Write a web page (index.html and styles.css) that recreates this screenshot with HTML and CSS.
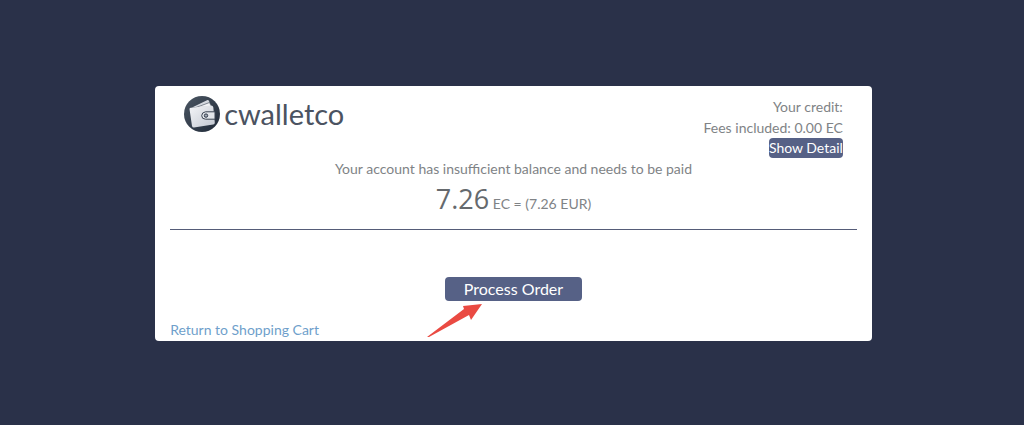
FILE: index.html
```
<!DOCTYPE html>
<html lang="en">
<head>
    <meta charset="UTF-8">
    <meta name="viewport" content="width=device-width, initial-scale=1.0">
    <title>cwalletco</title>
    <link rel="stylesheet" href="styles.css">
</head>
<body>
    <main class="container">
        <header class="top">
            <div class="logo">
                <svg class="logo-icon" viewBox="0 0 36 36" aria-hidden="true">
                    <defs>
                        <linearGradient id="disc" x1="0" y1="0" x2="1" y2="1">
                            <stop offset="0" stop-color="#4b5663"/>
                            <stop offset="1" stop-color="#202a38"/>
                        </linearGradient>
                        <linearGradient id="leather" x1="0" y1="0" x2="1" y2="1">
                            <stop offset="0" stop-color="#f4f5f8"/>
                            <stop offset="1" stop-color="#c3c8d1"/>
                        </linearGradient>
                    </defs>
                    <circle cx="18" cy="18" r="18" fill="url(#disc)"/>
                    <path d="M8 11.5 23 4.2Q24.5 3.7 25 5L27 10Z" fill="#d5d9e0"/>
                    <path d="M12 11.5 25.5 6.5 27.5 11Z" fill="#f2f3f6" stroke="#3a4452" stroke-width=".6"/>
                    <path d="M5.5 13Q5.5 11.8 7 11.7L27 9.5Q29 9.4 29.3 11.2L30.8 26.5Q30.9 28.3 29.2 28.6L10 31.5Q8.4 31.6 8 30Z" fill="url(#leather)"/>
                    <path d="M31 15.8H21.5Q17.7 16.3 17.7 19.7T21.5 23.2H31Z" fill="#e3e6eb" stroke="#3a4452" stroke-width="1"/>
                    <circle cx="22" cy="19.6" r="1.7" fill="#a3abb7" stroke="#303a49" stroke-width="1"/>
                </svg>
                <span class="logo-text">cwalletco</span>
            </div>
            <div class="credit">
                <div>Your credit:</div>
                <div>Fees included: 0.00 EC</div>
                <button type="button" class="btn btn-detail">Show Detail</button>
            </div>
        </header>

        <section class="payment">
            <div>Your account has insufficient balance and needs to be paid</div>
            <div class="amount"><span class="total">7.26</span> EC = (7.26 EUR)</div>
        </section>

        <hr>

        <div class="actions">
            <button type="submit" class="btn btn-process">Process Order</button>
            <svg class="arrow" viewBox="0 0 56 34" aria-hidden="true">
                <path d="M0 33 37 5 36 2 55 0 44 16 42 11 2 33Z" fill="#ea4a42"/>
            </svg>
        </div>

        <a href="#" class="return">Return to Shopping Cart</a>
    </main>
</body>
</html>
```
FILE: styles.css
```
body {
    font-family: Lato, sans-serif;
    font-size: 14px;
    line-height: 21px;
    color: #808386;
    background-color: #2a3149;
    margin: 0;
    padding: 86px 0 80px 3px;
}

.container {
    box-sizing: border-box;
    width: 70.2%;
    margin: 0 auto;
    padding: 10px 15px 1px;
    background-color: #ffffff;
    border-radius: 4px;
}

.top {
    display: flex;
    justify-content: space-between;
    align-items: flex-start;
    padding: 0 14px;
}

.logo {
    display: flex;
    align-items: center;
    gap: 4px;
}

.logo-icon {
    width: 36px;
    height: 36px;
}

.logo-text {
    font-size: 29px;
    line-height: 36px;
    color: #4b5361;
}

.credit {
    display: flex;
    flex-direction: column;
    align-items: flex-end;
}

.btn {
    font-family: inherit;
    color: #ffffff;
    background-color: #566186;
    border: none;
    border-radius: 4px;
    cursor: pointer;
}

.btn-detail {
    font-size: 14px;
    line-height: 20px;
    padding: 0;
}

.payment {
    text-align: center;
}

.amount {
    line-height: 40px;
}

.total {
    font-family: "Open Sans", sans-serif;
    font-size: 27px;
    color: #65696d;
}

hr {
    height: 1px;
    margin: 5px 0 0;
    border: none;
    background-color: #555c78;
}

.actions {
    position: relative;
    padding: 47px 0 18px;
    text-align: center;
}

.btn-process {
    font-size: 16px;
    line-height: 24px;
    padding: 0 19px;
}

/* Pointer laid over the space under the button */
.arrow {
    position: absolute;
    left: 50%;
    top: 74px;
    width: 56px;
    height: 34px;
    margin-left: -86px;
}

.return {
    color: #6f9fcb;
    text-decoration: none;
}
```
